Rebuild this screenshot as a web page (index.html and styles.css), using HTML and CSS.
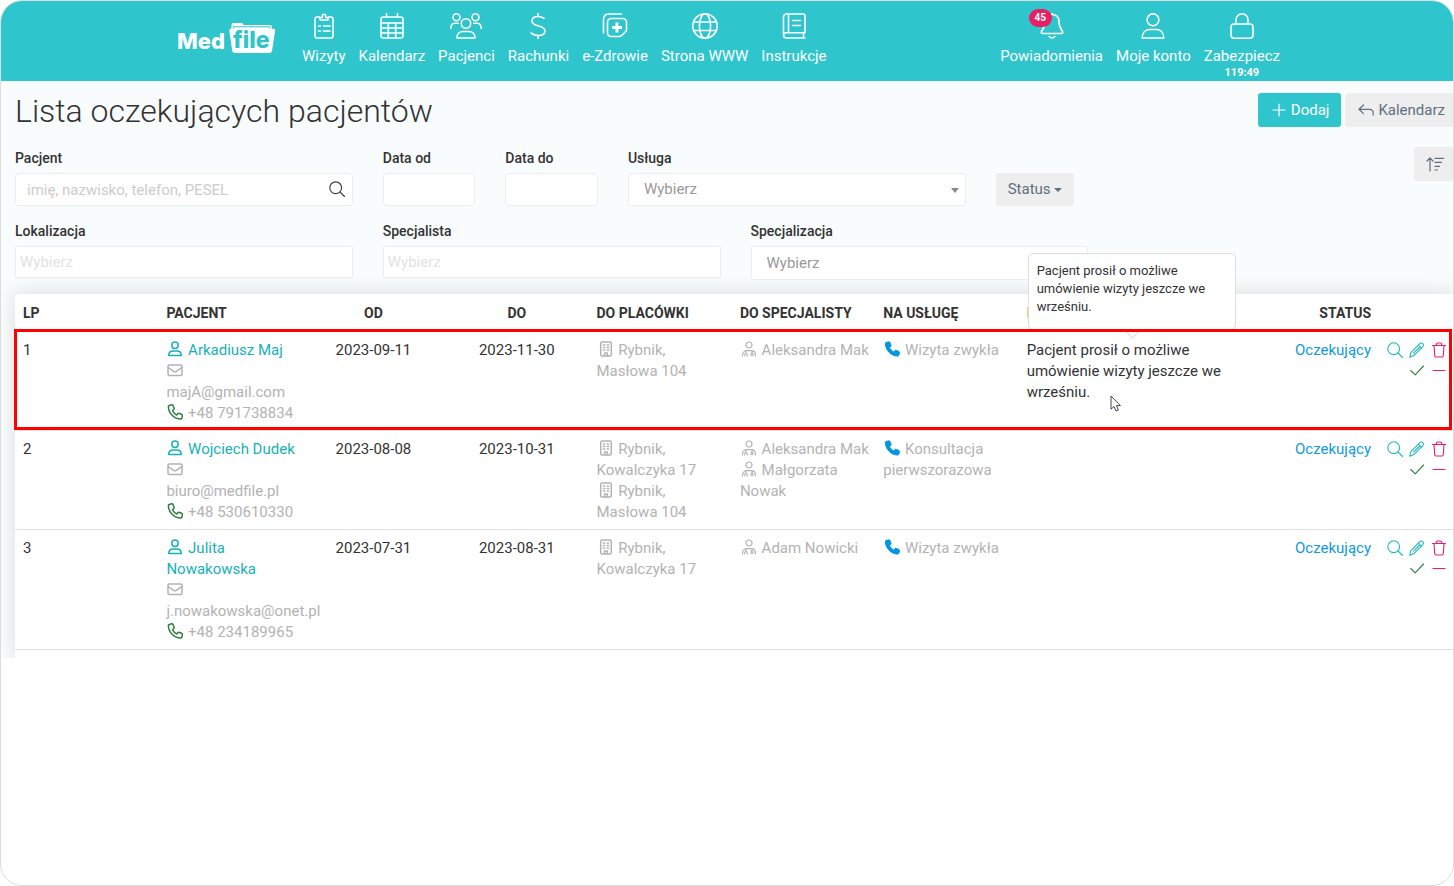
FILE: index.html
```html
<!DOCTYPE html>
<html lang="pl">
<head>
<meta charset="utf-8">
<meta name="viewport" content="width=device-width, initial-scale=1">
<title>Lista oczekujących pacjentów</title>
<link rel="stylesheet" href="styles.css">
</head>
<body>
<svg class="sprite" aria-hidden="true">
  <symbol id="i-user" viewBox="0 0 16 16"><circle cx="8" cy="4.300" r="3.200"/><path d="M1.700 14.500c0-3 2-4.600 4.500-4.600h3.600c2.500 0 4.500 1.600 4.500 4.600z"/></symbol>
  <symbol id="i-mail" viewBox="0 0 16 16"><rect x="1" y="3" width="14" height="10.500" rx="1.500"/><path d="M1.300 5.500 6.600 9.300q1.400.9 2.800 0l5.300-3.800"/></symbol>
  <symbol id="i-phone" viewBox="0 0 16 16"><path d="M2.200 1.500 4.800.8c.5-.1.900.1 1.100.6l1.200 3c.2.400 0 .8-.3 1.100L5.400 6.700a10.500 10.500 0 0 0 4.300 4.300l1.300-1.500c.3-.3.7-.4 1.100-.2l2.800 1.200c.5.2.7.6.6 1.100l-.7 2.700c-.1.500-.5.8-1 .8C7.100 15.100 1.400 9.200 1.400 2.500c0-.5.300-.9.800-1z"/></symbol>
  <symbol id="i-building" viewBox="0 0 16 16"><rect x="2.700" y="1" width="10.600" height="14" rx="1.500"/><path d="M6.600 14.600v-2.500h2.800v2.500M5.400 4h1.400M9.200 4h1.400M5.400 6.500h1.400M9.200 6.500h1.400M5.400 9h1.400M9.200 9h1.400"/></symbol>
  <symbol id="i-doctor" viewBox="0 0 16 16"><circle cx="8" cy="4" r="3"/><path d="M1.600 15v-1c0-2.600 1.900-4.300 4.400-4.300h4c2.500 0 4.400 1.700 4.400 4.300v1M5 10v2.500M3.700 15v-1.300q0-1.200 1.300-1.200t1.300 1.200V15M11 10v2.300"/><circle cx="11" cy="13.500" r="1.100"/></symbol>
  <symbol id="i-search" viewBox="0 0 16 16"><circle cx="6.700" cy="6.700" r="5.900"/><path d="m11 11 4.500 4.500"/></symbol>
  <symbol id="i-pencil" viewBox="0 0 16 16"><path d="m.8 15.200 1-4.600 9-9c.9-.9 2.200-.9 3 0 .9.800.9 2.100 0 3l-9 9zM9.300 3.100l3.300 3.300M4.600 11.200l5.700-5.700"/></symbol>
  <symbol id="i-trash" viewBox="0 0 16 16"><path d="M1.500 3.500h13M3 3.500l.7 10.200q.1 1.300 1.400 1.300h5.800q1.300 0 1.400-1.300L13 3.500M5 3.300l.7-1.700q.3-.6.900-.6h2.800q.6 0 .9.600l.7 1.700"/></symbol>
  <symbol id="i-check" viewBox="0 0 16 16"><path d="m1.700 8.500 4.500 4.300L14.500 4"/></symbol>
  <symbol id="i-minus" viewBox="0 0 16 16"><path d="M2 8.500h12"/></symbol>
  <symbol id="i-plus" viewBox="0 0 16 16"><path d="M2 8h12M8 2v12"/></symbol>
  <symbol id="i-reply" viewBox="0 0 16 16"><path d="M5.500 3 1 7.300l4.500 4.300M1.200 7.300h10.300c2.200 0 3.700 1.500 3.700 4v1.800"/></symbol>
  <symbol id="i-sort" viewBox="0 0 18 16"><path d="M4 15V2M1 5l3-3.200L7 5M9 2.300h8.500M9 6.300h6.500M9 10.300h4.500M9 14h2.500"/></symbol>
</svg>

<div class="frame">
  <header class="topbar">
    <div class="topbar-inner">
      <a class="logo" href="#" aria-label="MedFile">
        <svg viewBox="0 0 98 32" width="98" height="32">
          <path class="folder" d="M53.500 5.500V3.300Q53.500 1 55.800 1h7.200q1.600 0 2.300 1.200l.5.900h25.400q2.600 0 2.600 2.400v1.300h1.600q2 0 1.700 2l-3 19.500q-.4 2.700-3 2.700H57q-2.600 0-2.900-2.700L51.300 8.800q-.2-2 1.600-2z"/>
          <path class="folder-slot" d="M55.500 6.500V4.800H92v1.700"/>
          <text class="logo-med" x="-1" y="27">Med</text>
          <text class="logo-file" x="55" y="26">file</text>
        </svg>
      </a>
      <nav class="nav" aria-label="Menu główne">
        <a class="nav-item" href="#"><svg class="nav-icon" viewBox="0 0 26 26"><path d="M8.500 4H6.300Q4 4 4 6.300v16.400Q4 25 6.300 25h13.400q2.300 0 2.300-2.300V6.300Q22 4 19.700 4h-2.200M9 4.500h2.300V3a1.700 1.700 0 0 1 3.400 0v1.500H17V7H9zM12.500 13H19M12.500 18H19"/><path d="M7.500 13h2M7.500 18h2"/></svg>Wizyty</a>
        <a class="nav-item" href="#"><svg class="nav-icon" viewBox="0 0 26 26"><rect x="2" y="4" width="22" height="21" rx="2.500"/><path d="M7.500 0v4M18.500 0v4M2 10h22M2 15h22M2 20h22M9.300 10v15M16.700 10v15"/></svg>Kalendarz</a>
        <a class="nav-item" href="#"><svg class="nav-icon nav-icon-wide" viewBox="0 0 32 26"><circle cx="6.500" cy="4.300" r="3.500"/><circle cx="25.500" cy="4.300" r="3.500"/><circle cx="16" cy="10.500" r="4.700"/><path d="M7 25c0-4.200 2.700-6.500 6-6.500h6c3.300 0 6 2.300 6 6.500zM.8 15.500c0-3.700 1.700-5.300 4.200-5.300h3.200M31.200 15.500c0-3.700-1.700-5.300-4.200-5.300h-3.200"/></svg>Pacjenci</a>
        <a class="nav-item" href="#"><svg class="nav-icon" viewBox="0 0 26 26"><path d="M13 0v3.500M13 22.500V26M19 5.300c-2-1.400-4-1.800-6-1.800-3.800 0-6 1.700-6 4.500 0 6.500 13 3.500 13 10 0 3-2.800 4.500-6.700 4.500-2.600 0-5-.8-7.300-2.500"/></svg>Rachunki</a>
        <a class="nav-item" href="#"><svg class="nav-icon" viewBox="0 0 26 26"><path d="M1.500 20V6.500Q1.500 1 7 1h12.500"/><path d="M9.500 5.500h11q4 0 4 4v7.300q0 1-.7 1.700l-4.600 4.300q-.7.700-1.700.7h-8q-4 0-4-4v-10q0-4 4-4z"/><path class="solid" d="M13.500 9.500h3v3.500H20v3h-3.500v3.500h-3V16H10v-3h3.500z"/></svg>e-Zdrowie</a>
        <a class="nav-item" href="#"><svg class="nav-icon" viewBox="0 0 26 26"><circle cx="13" cy="13" r="12.200"/><ellipse cx="13" cy="13" rx="5.600" ry="12.200"/><path d="M1.700 9h22.600M1.700 17.500h22.600"/></svg>Strona WWW</a>
        <a class="nav-item" href="#"><svg class="nav-icon" viewBox="0 0 26 26"><path d="M24 19.500V2.700Q24 1 22.300 1H5.500Q2.500 1 2.500 4v18q0 3 3 3H24M22.500 19.500V25M24 19.800H5.500q-3 0-3 2.500M7.500 1v18.500M11.500 7.500h8M11.500 12.500h8"/></svg>Instrukcje</a>
      </nav>
      <nav class="nav nav-right" aria-label="Konto">
        <a class="nav-item" href="#"><span class="bell"><svg class="nav-icon" viewBox="0 0 26 26"><path d="M13 1.500c-4.500 0-7 3.300-7 7.300 0 5-1.500 7-3.300 9.400-.8 1.200-.2 2.300 1 2.300h18.600c1.200 0 1.800-1.100 1-2.300C21.500 15.800 20 13.800 20 8.800c0-4-2.500-7.300-7-7.300zM13 0v1.500M10.200 23.500q2.800 3 5.600 0"/></svg><span class="badge">45</span></span>Powiadomienia</a>
        <a class="nav-item" href="#"><svg class="nav-icon" viewBox="0 0 26 26"><circle cx="13" cy="6.800" r="5.900"/><path d="M2.200 25c0-5.500 3.300-8.500 7.500-8.500h6.600c4.200 0 7.500 3 7.500 8.500z"/></svg>Moje konto</a>
        <a class="nav-item" href="#"><svg class="nav-icon" viewBox="0 0 26 26"><rect x="2" y="11" width="22" height="14.200" rx="3.200"/><path d="M7 11V6.800a6 6 0 0 1 12 0V11"/></svg>Zabezpiecz<span class="timer">119:49</span></a>
      </nav>
    </div>
  </header>

  <main class="content">
    <div class="title-row">
      <h1>Lista oczekujących pacjentów</h1>
      <div class="title-actions">
        <button class="btn btn-primary" type="button"><svg class="icon"><use href="#i-plus"/></svg>Dodaj</button>
        <button class="btn" type="button"><svg class="icon"><use href="#i-reply"/></svg>Kalendarz</button>
      </div>
    </div>

    <form class="filters">
      <div class="field span-3">
        <label for="f-patient">Pacjent</label>
        <div class="search-box">
          <input id="f-patient" class="control" type="text" placeholder="imię, nazwisko, telefon, PESEL">
          <button class="search-btn" type="button" aria-label="Szukaj"><svg class="icon"><use href="#i-search"/></svg></button>
        </div>
      </div>
      <div class="field"><label for="f-from">Data od</label><input id="f-from" class="control" type="text"></div>
      <div class="field"><label for="f-to">Data do</label><input id="f-to" class="control" type="text"></div>
      <div class="field span-3">
        <label for="f-service">Usługa</label>
        <div class="select-box"><select id="f-service" class="control"><option>Wybierz</option></select></div>
      </div>
      <div class="field-status"><button class="btn btn-status" type="button">Status<span class="caret"></span></button></div>
      <button class="btn btn-sort" type="button" aria-label="Sortuj"><svg class="icon icon-sort"><use href="#i-sort"/></svg></button>

      <div class="field span-3 row-start"><label for="f-place">Lokalizacja</label><input id="f-place" class="control control-tags" type="text" placeholder="Wybierz"></div>
      <div class="field span-3"><label for="f-doctor">Specjalista</label><input id="f-doctor" class="control control-tags" type="text" placeholder="Wybierz"></div>
      <div class="field span-3">
        <label for="f-spec">Specjalizacja</label>
        <div class="select-box"><select id="f-spec" class="control control-tall"><option>Wybierz</option></select></div>
      </div>
    </form>

    <div class="panel">
      <table class="list">
        <colgroup><col><col><col><col><col><col><col><col class="col-note"><col><col class="col-actions"></colgroup>
        <thead>
          <tr><th>LP</th><th>PACJENT</th><th class="center">OD</th><th class="center">DO</th><th>DO PLACÓWKI</th><th>DO SPECJALISTY</th><th>NA USŁUGĘ</th><th>I</th><th class="right">STATUS</th><th></th></tr>
        </thead>
        <tbody>
          <tr class="highlight">
            <td>1</td>
            <td class="muted nowrap"><a class="patient" href="#"><svg class="icon"><use href="#i-user"/></svg> Arkadiusz Maj</a><br><svg class="icon icon-bold"><use href="#i-mail"/></svg><br>majA@gmail.com<br><svg class="icon icon-bold green"><use href="#i-phone"/></svg> +48 791738834</td>
            <td class="center">2023-09-11</td>
            <td class="center">2023-11-30</td>
            <td class="muted"><svg class="icon icon-bold"><use href="#i-building"/></svg> Rybnik,<br>Masłowa 104</td>
            <td class="muted nowrap"><svg class="icon"><use href="#i-doctor"/></svg> Aleksandra Mak</td>
            <td class="muted nowrap"><svg class="icon icon-solid"><use href="#i-phone"/></svg> Wizyta zwykła</td>
            <td class="note">Pacjent prosił o możliwe umówienie wizyty jeszcze we wrześniu.
              <div class="tooltip" role="tooltip">Pacjent prosił o możliwe umówienie wizyty jeszcze we wrześniu.</div>
              <svg class="cursor" viewBox="0 0 12 18"><path d="M1 1v13.200l3-2.700 2 4.500 2.400-1-2-4.400h4z"/></svg>
            </td>
            <td class="right"><a class="status" href="#">Oczekujący</a></td>
            <td class="actions"><div class="action-set">
              <button type="button" aria-label="Podgląd"><svg class="icon"><use href="#i-search"/></svg></button>
              <button type="button" aria-label="Edytuj"><svg class="icon"><use href="#i-pencil"/></svg></button>
              <button type="button" class="red" aria-label="Usuń"><svg class="icon"><use href="#i-trash"/></svg></button>
              <button type="button" class="green second" aria-label="Zatwierdź"><svg class="icon"><use href="#i-check"/></svg></button>
              <button type="button" class="red" aria-label="Odrzuć"><svg class="icon"><use href="#i-minus"/></svg></button>
            </div></td>
          </tr>
          <tr>
            <td>2</td>
            <td class="muted nowrap"><a class="patient" href="#"><svg class="icon"><use href="#i-user"/></svg> Wojciech Dudek</a><br><svg class="icon icon-bold"><use href="#i-mail"/></svg><br>biuro@medfile.pl<br><svg class="icon icon-bold green"><use href="#i-phone"/></svg> +48 530610330</td>
            <td class="center">2023-08-08</td>
            <td class="center">2023-10-31</td>
            <td class="muted"><svg class="icon icon-bold"><use href="#i-building"/></svg> Rybnik,<br>Kowalczyka 17<br><svg class="icon icon-bold"><use href="#i-building"/></svg> Rybnik,<br>Masłowa 104</td>
            <td class="muted nowrap"><svg class="icon"><use href="#i-doctor"/></svg> Aleksandra Mak<br><svg class="icon"><use href="#i-doctor"/></svg> Małgorzata<br>Nowak</td>
            <td class="muted"><svg class="icon icon-solid"><use href="#i-phone"/></svg> Konsultacja pierwszorazowa</td>
            <td></td>
            <td class="right"><a class="status" href="#">Oczekujący</a></td>
            <td class="actions"><div class="action-set">
              <button type="button" aria-label="Podgląd"><svg class="icon"><use href="#i-search"/></svg></button>
              <button type="button" aria-label="Edytuj"><svg class="icon"><use href="#i-pencil"/></svg></button>
              <button type="button" class="red" aria-label="Usuń"><svg class="icon"><use href="#i-trash"/></svg></button>
              <button type="button" class="green second" aria-label="Zatwierdź"><svg class="icon"><use href="#i-check"/></svg></button>
              <button type="button" class="red" aria-label="Odrzuć"><svg class="icon"><use href="#i-minus"/></svg></button>
            </div></td>
          </tr>
          <tr>
            <td>3</td>
            <td class="muted nowrap"><a class="patient" href="#"><svg class="icon"><use href="#i-user"/></svg> Julita<br>Nowakowska</a><br><svg class="icon icon-bold"><use href="#i-mail"/></svg><br>j.nowakowska@onet.pl<br><svg class="icon icon-bold green"><use href="#i-phone"/></svg> +48 234189965</td>
            <td class="center">2023-07-31</td>
            <td class="center">2023-08-31</td>
            <td class="muted"><svg class="icon icon-bold"><use href="#i-building"/></svg> Rybnik,<br>Kowalczyka 17</td>
            <td class="muted nowrap"><svg class="icon"><use href="#i-doctor"/></svg> Adam Nowicki</td>
            <td class="muted nowrap"><svg class="icon icon-solid"><use href="#i-phone"/></svg> Wizyta zwykła</td>
            <td></td>
            <td class="right"><a class="status" href="#">Oczekujący</a></td>
            <td class="actions"><div class="action-set">
              <button type="button" aria-label="Podgląd"><svg class="icon"><use href="#i-search"/></svg></button>
              <button type="button" aria-label="Edytuj"><svg class="icon"><use href="#i-pencil"/></svg></button>
              <button type="button" class="red" aria-label="Usuń"><svg class="icon"><use href="#i-trash"/></svg></button>
              <button type="button" class="green second" aria-label="Zatwierdź"><svg class="icon"><use href="#i-check"/></svg></button>
              <button type="button" class="red" aria-label="Odrzuć"><svg class="icon"><use href="#i-minus"/></svg></button>
            </div></td>
          </tr>
        </tbody>
      </table>
    </div>
  </main>
</div>
</body>
</html>
```

FILE: styles.css
```css
* { box-sizing: border-box; }

body {
  margin: 0;
  background: #fff;
  color: #333;
  font: 15px/21px Roboto, "Noto Sans", sans-serif;
}

a { color: inherit; text-decoration: none; }
button, input, select { font: inherit; }
button { cursor: pointer; }

.sprite { display: none; }

.frame {
  min-height: 100vh;
  border: 1px solid #ddd;
  border-radius: 22px;
  overflow: hidden;
  background: #fff;
}

/* Top bar */
.topbar { background: #2fc5cd; color: #fff; }

.topbar-inner {
  display: flex;
  max-width: 1106px;
  min-height: 80px;
  margin: 0 auto;
  padding-top: 12px;
}

.logo { margin: 9px 26px 0 4px; }
.logo svg { display: block; }
.folder { fill: #fff; }
.folder-slot { fill: none; stroke: #2fc5cd; stroke-width: 1; }
.logo-med { font: 800 22px Inter, sans-serif; fill: #fff; }
.logo-file { font: 800 23px Inter, sans-serif; fill: #2fc5cd; }

.nav { display: flex; align-items: flex-start; gap: 13px; }
.nav-right { margin-left: auto; }

.nav-item {
  display: flex;
  flex-direction: column;
  align-items: center;
  white-space: nowrap;
}

.nav-icon {
  display: block;
  width: 26px;
  height: 26px;
  margin-bottom: 7px;
  fill: none;
  stroke: #fff;
  stroke-width: 1.6;
  stroke-linecap: round;
  stroke-linejoin: round;
}
.nav-icon-wide { width: 32px; }
.nav-icon .solid { fill: #fff; stroke: none; }

.bell { position: relative; }

.badge {
  position: absolute;
  top: -4px;
  left: -10px;
  padding: 0 6px;
  border-radius: 9px;
  background: #e91e63;
  font-size: 10px;
  font-weight: 700;
  line-height: 18px;
}

.timer { font-size: 11px; font-weight: 700; line-height: 12px; }

/* Content */
.content {
  overflow: hidden;
  padding: 12px 0 0 14px;
  background: #f9fcfd;
}

.title-row {
  display: flex;
  align-items: center;
  justify-content: space-between;
  margin: 0 -4px 20px 0;
}

h1 {
  margin: 0;
  padding-top: 2px;
  font-size: 32px;
  font-weight: 300;
  line-height: 32px;
}

.title-actions { display: flex; gap: 4px; }

.btn {
  display: flex;
  align-items: center;
  gap: 3px;
  height: 34px;
  padding: 0 12px;
  border: 0;
  border-radius: 3px;
  background: #eee;
  color: #607080;
}
.btn-primary { background: #2fc5cd; color: #fff; }
.btn-status { height: 33px; }

.btn-sort {
  grid-column: 12;
  justify-self: end;
  align-self: start;
}

.caret {
  border: 4px solid transparent;
  border-top-color: currentColor;
  border-bottom: 0;
}

.icon {
  width: 16px;
  height: 16px;
  margin: 0 1px;
  vertical-align: -2px;
  fill: none;
  stroke: currentColor;
  stroke-width: 1.2;
  stroke-linecap: round;
  stroke-linejoin: round;
}
.icon-sort { width: 18px; margin: 0; }
.icon-bold { stroke-width: 1.5; }
.icon-solid { fill: #0097e0; stroke: #0097e0; stroke-width: 1; }

.filters {
  display: grid;
  grid-template-columns: repeat(12, minmax(0, 1fr));
  gap: 14px 30px;
  margin: 0 -3px 14px 0;
}

.span-3 { grid-column: span 3; }
.row-start { grid-column: 1 / span 3; }
.field-status { display: flex; align-items: flex-end; }

.field label {
  display: block;
  margin-bottom: 4px;
  font-size: 14px;
  font-weight: 500;
  line-height: 22px;
}

.control {
  display: block;
  width: 100%;
  height: 33px;
  padding: 0 11px;
  border: 1px solid #e9eef1;
  border-radius: 4px;
  background: #fff;
  color: #333;
}
.control::placeholder { color: #ccc; }
.control-tags { height: 32px; padding: 0 4px; border-radius: 2px; }
.control-tags::placeholder { color: #e2e2e2; }

.search-box, .select-box { position: relative; }

.search-btn {
  position: absolute;
  top: 8px;
  right: 7px;
  padding: 0;
  border: 0;
  background: none;
  color: #444;
  line-height: 16px;
}

select.control {
  appearance: none;
  padding: 0 15px;
  border-radius: 2px;
  color: #999;
}
select.control-tall { height: 34px; }

.select-box::after {
  content: "";
  position: absolute;
  top: 15px;
  right: 7px;
  border: 4px solid transparent;
  border-top: 5px solid #888;
  border-bottom: 0;
}

/* Waiting list */
.panel {
  padding-bottom: 8px;
  border-radius: 4px 0 0 0;
  background: #fff;
  box-shadow: 0 0 20px rgba(0, 20, 20, 0.14);
}

.list {
  width: 100%;
  table-layout: fixed;
  border-collapse: separate;
  border-spacing: 0;
}

.col-note { width: 217px; }
.col-actions { width: 74px; }

th {
  padding: 9px 8px 8px;
  font-size: 14px;
  font-weight: 700;
  text-align: left;
  white-space: nowrap;
}

td {
  padding: 8px 8px 6px;
  border-bottom: 1px solid #e2e2e2;
  vertical-align: top;
}

th.center, td.center { text-align: center; }
th.right, td.right { text-align: right; }
.muted { color: #b3b3b3; }
.nowrap { white-space: nowrap; }
.patient { color: #17b1b8; }
.patient .icon { stroke-width: 1.5; }
.status { color: #1199e0; }
.green { color: #2f8043; }

/* Frame around the whole row; the row is the containing block */
.highlight { position: relative; }
.highlight td:first-child::after {
  content: "";
  position: absolute;
  inset: -3px 1px 1px -1px;
  z-index: 2;
  border: 3px solid #f00;
  pointer-events: none;
}

.note { position: relative; }

.tooltip {
  position: absolute;
  bottom: calc(100% + 2px);
  left: 9px;
  z-index: 1;
  width: 208px;
  padding: 8px 8px 13px;
  border: 1px solid #ddd;
  border-radius: 5px;
  background: #fff;
  font-size: 13px;
  line-height: 18px;
}
.tooltip::after {
  content: "";
  position: absolute;
  bottom: -7px;
  left: 97px;
  width: 12px;
  height: 12px;
  border: solid #ddd;
  border-width: 0 1px 1px 0;
  background: #fff;
  transform: rotate(45deg);
}

.cursor {
  position: absolute;
  top: 63px;
  left: 91px;
  width: 12px;
  height: 18px;
  fill: #fff;
  stroke: #445;
}

.actions { padding-left: 8px; padding-right: 6px; }

.action-set {
  display: grid;
  grid-template-columns: repeat(3, 16px);
  column-gap: 6px;
}

.action-set button {
  height: 20px;
  padding: 0;
  border: 0;
  background: none;
  color: #22b8bf;
  line-height: 16px;
}
.action-set .icon { display: block; margin: 0; stroke-width: 1.1; }
.action-set .red { color: #ec1e63; }
.action-set .green { color: #2f8043; }
.action-set .second { grid-column: 2; }
```
